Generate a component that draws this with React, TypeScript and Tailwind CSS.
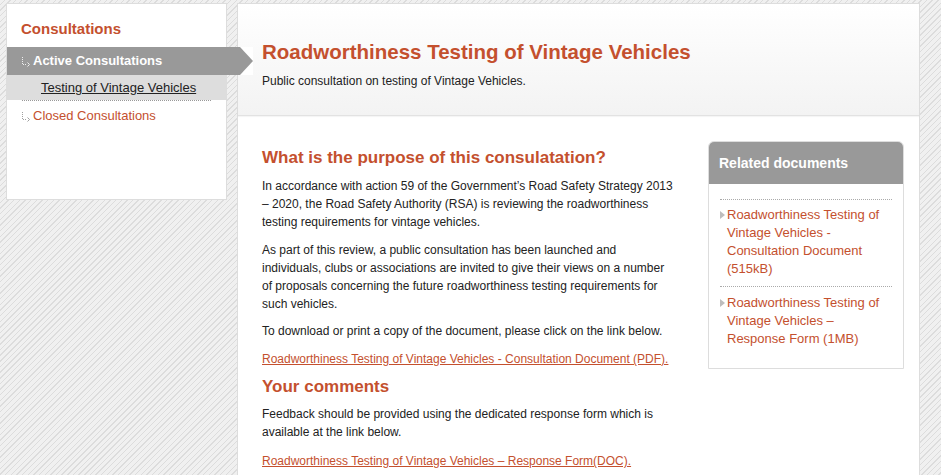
import React from "react";

const red = "text-[#c4502e]";

function NavIcon({ color }: { color: string }) {
  return (
    <svg width="10" height="10" viewBox="0 0 10 10" className="shrink-0 mt-[1px]">
      <path d="M1.5 0 V7.5 H6" stroke={color} strokeWidth="1" strokeDasharray="1 1" fill="none" />
      <path d="M6.5 5.5 L8.5 7.5 L6.5 9.5" stroke={color} strokeWidth="1" fill="none" />
    </svg>
  );
}

function DocIcon() {
  return (
    <svg width="5" height="8" viewBox="0 0 5 8" className="shrink-0 mt-[5px]">
      <path d="M0 0 L5 4 L0 8 Z" fill="#bdbdbd" />
    </svg>
  );
}

function SideNav() {
  return (
    <aside className="w-[221px] h-[197px] shrink-0 bg-white border border-[#dddddd]">
      <h3 className={`pl-[14px] pt-[16px] text-[15px] leading-[18px] font-bold ${red}`}>Consultations</h3>
      <div className="relative mt-[9px] h-[28px] bg-[#999999] flex items-center gap-[2px] pl-[14px]">
        <NavIcon color="#eeeeee" />
        <span className="text-[13px] font-bold text-white">Active Consultations</span>
        {/* the tab point reaches over into the main panel */}
        <svg width="27" height="28" viewBox="0 0 27 28" className="absolute left-full top-0">
          <rect x="14" y="0" width="13" height="28" fill="#ffffff" />
          <polygon points="0,0 14,0 27,14 14,28 0,28" fill="#999999" />
        </svg>
      </div>
      <div className="h-[25px] bg-[#dddddd] flex items-center pl-[34px]">
        <a className="text-[13px] text-[#222222] underline">Testing of Vintage Vehicles</a>
      </div>
      <div className="mx-[15px] border-t border-dotted border-[#999999]" />
      <div className="flex items-center gap-[2px] pl-[14px] pt-[6px] leading-[18px]">
        <NavIcon color="#a0a0a0" />
        <a className={`text-[13px] ${red}`}>Closed Consultations</a>
      </div>
    </aside>
  );
}

function RelatedDocs() {
  const docs = [
    "Roadworthiness Testing of Vintage Vehicles - Consultation Document (515kB)",
    "Roadworthiness Testing of Vintage Vehicles – Response Form (1MB)",
  ];
  return (
    <div className="w-[196px] shrink-0 border border-[#dddddd] rounded-t-[6px] overflow-hidden">
      <div className="h-[42px] bg-[#999999] flex items-center pl-[10px]">
        <h4 className="text-[14px] font-bold text-white">Related documents</h4>
      </div>
      <ul className="px-[11px] pt-[15px] pb-[20px]">
        {docs.map((d, i) => (
          <li key={i} className={`border-t border-dotted border-[#aaaaaa] flex gap-[2px] ${i === 0 ? "pt-[6px] pb-[8px]" : "pt-[7px]"}`}>
            <DocIcon />
            <a className={`text-[13px] leading-[18px] ${red}`}>{d}</a>
          </li>
        ))}
      </ul>
    </div>
  );
}

export default function App() {
  return (
    <div className="h-[475px] overflow-hidden flex items-start gap-[10px] pl-[6px] pt-[3px] font-['Liberation_Sans',Arial,sans-serif] bg-[repeating-linear-gradient(135deg,#f0f0f0_0px,#f0f0f0_3px,#dcdcdc_3px,#dcdcdc_4px)]">
      <SideNav />

      <main className="w-[683px] h-[472px] shrink-0 bg-white border border-b-0 border-[#dddddd]">
        {/* header band */}
        <header className="h-[112px] pl-[24px] pt-[36px] bg-gradient-to-b from-white to-[#f3f3f3] border-b border-[#e2e2e2] shadow-[0_1px_1px_rgba(0,0,0,0.04)]">
          <h1 className={`text-[20.5px] leading-[24px] font-bold ${red}`}>Roadworthiness Testing of Vintage Vehicles</h1>
          <p className="mt-[8px] text-[12px] leading-[18px] text-[#222222]">Public consultation on testing of Vintage Vehicles.</p>
        </header>

        <div className="flex items-start gap-[34px] pl-[24px] pt-[25px]">
          <section className="w-[412px] shrink-0 text-[12px] leading-[18px] text-[#222222]">
            <h2 className={`mt-[7px] text-[17px] leading-[20px] font-bold ${red}`}>What is the purpose of this consulatation?</h2>
            <p className="mt-[9px]">
              In accordance with action 59 of the Government’s Road Safety Strategy 2013 – 2020, the Road Safety Authority (RSA) is reviewing the roadworthiness testing requirements for vintage vehicles.
            </p>
            <p className="mt-[10px]">
              As part of this review, a public consultation has been launched and individuals, clubs or associations are invited to give their views on a number of proposals concerning the future roadworthiness testing requirements for such vehicles.
            </p>
            <p className="mt-[9px]">To download or print a copy of the document, please click on the link below.</p>
            <p className="mt-[10px]">
              <a className={`underline ${red}`}>Roadworthiness Testing of Vintage Vehicles - Consultation Document (PDF).</a>
            </p>
            <h2 className={`mt-[9px] text-[17px] leading-[20px] font-bold ${red}`}>Your comments</h2>
            <p className="mt-[8px]">
              Feedback should be provided using the dedicated response form which is available at the link below.
            </p>
            <p className="mt-[11px]">
              <a className={`underline ${red}`}>Roadworthiness Testing of Vintage Vehicles – Response Form(DOC).</a>
            </p>
          </section>

          <RelatedDocs />
        </div>
      </main>
    </div>
  );
}
